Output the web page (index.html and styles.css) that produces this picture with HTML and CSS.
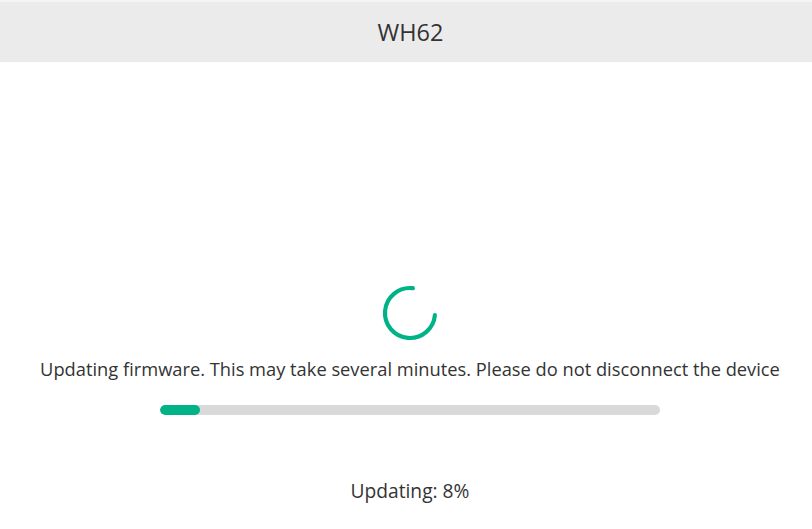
FILE: index.html
```html
<!DOCTYPE html>
<html lang="en">
<head>
<meta charset="utf-8">
<title>WH62</title>
<link rel="stylesheet" href="styles.css">
</head>
<body>
<header class="topbar">WH62</header>
<main class="update">
  <svg class="spinner" width="60" height="60" viewBox="0 0 60 60" aria-hidden="true">
    <circle cx="30" cy="30" r="25" fill="none" stroke="#00b386" stroke-width="4.2" stroke-linecap="round" stroke-dasharray="117.8 157" transform="rotate(5 30 30)"/>
  </svg>
  <p class="message">Updating firmware. This may take several minutes. Please do not disconnect the device</p>
  <div class="track"><div class="fill" style="width:8%"></div></div>
  <p class="status">Updating: 8%</p>
</main>
</body>
</html>
```
FILE: styles.css
```css
html, body {
  margin: 0;
  padding: 0;
  background: #ffffff;
}
body {
  font-family: "Open Sans", "Noto Sans", sans-serif;
  color: #333333;
  width: 812px;
}
.topbar {
  border-top: 2px solid #f2f5f4;
  height: 60px;
  padding-left: 9px;
  background: #ebebeb;
  display: flex;
  align-items: center;
  justify-content: center;
  font-size: 23.5px;
  color: #333333;
}
.update {
  display: flex;
  flex-direction: column;
  align-items: center;
  padding-top: 221px;
  padding-left: 8px;
}
.spinner {
  display: block;
}
.message {
  margin: 14px 0 0;
  font-size: 18.3px;
  line-height: 24px;
  white-space: nowrap;
}
.track {
  margin-top: 24px;
  width: 500px;
  height: 10px;
  border-radius: 5px;
  background: #d9d9d9;
  overflow: hidden;
}
.fill {
  height: 100%;
  border-radius: 5px;
  background: #00b386;
}
.status {
  margin: 64px 0 0;
  font-size: 19.2px;
  line-height: 24px;
}
```
